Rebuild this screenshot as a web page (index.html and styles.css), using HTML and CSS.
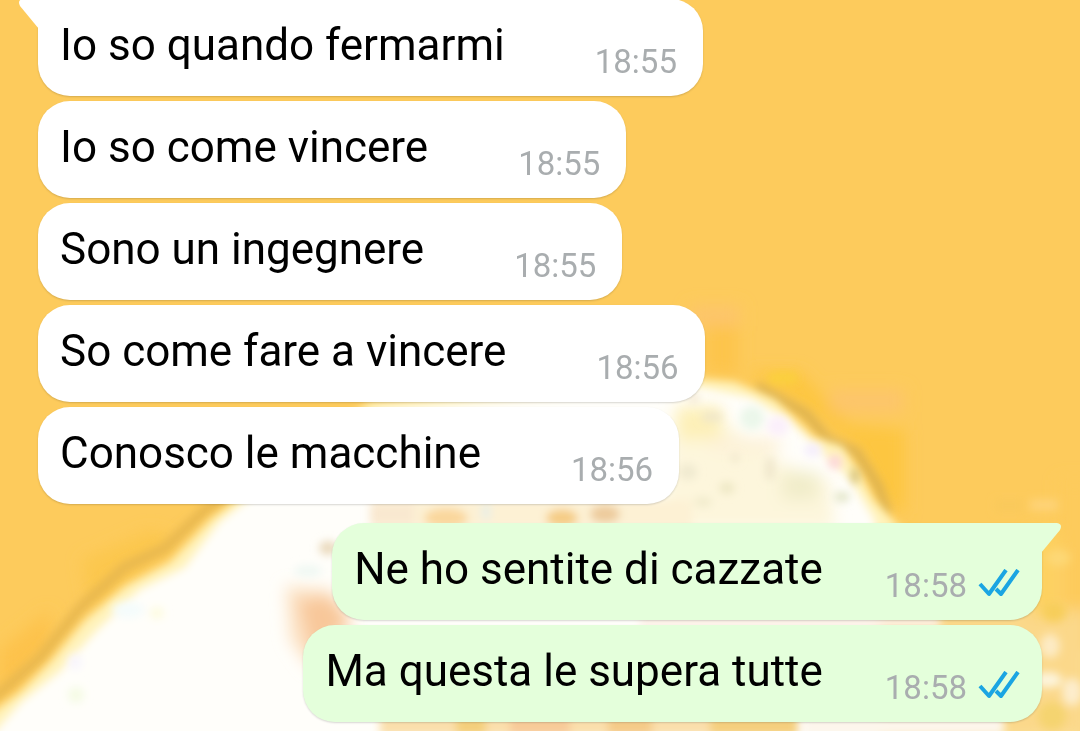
FILE: index.html
```html
<!DOCTYPE html>
<html lang="it">
<head>
    <meta charset="UTF-8">
    <title>Chat</title>
    <meta name="viewport" content="width=device-width, initial-scale=1.0">
    <link rel="stylesheet" href="styles.css">
</head>
<body>
    <svg class="wallpaper" viewBox="0 0 1080 731" preserveAspectRatio="xMidYMax slice" aria-hidden="true">
        <defs>
            <filter id="soft" x="-20%" y="-20%" width="140%" height="140%"><feGaussianBlur stdDeviation="4"/></filter>
            <filter id="softer" x="-50%" y="-50%" width="200%" height="200%"><feGaussianBlur stdDeviation="8"/></filter>
        </defs>
        <rect width="1080" height="731" fill="#fdcb5c"/>
        <!-- warm patches and darker fringe round the shape -->
        <g filter="url(#softer)">
            <path d="M82 560L150 530L180 540L90 610Z" fill="#fcc74e"/>
            <path d="M0 650L50 610L50 650L0 700Z" fill="#fdc24c"/>
            <path d="M706 320L738 320L738 376L706 372Z" fill="#fdc44c"/>
            <path d="M745 372L800 372L850 425L905 430L905 515L880 500L860 450L800 405Z" fill="#fdc641"/>
            <rect x="830" y="390" width="74" height="22" fill="#fdc56c"/>
            <rect x="690" y="306" width="50" height="20" fill="#fdc56c"/>
        </g>
        <g filter="url(#soft)" fill="none" stroke-linecap="round">
            <path d="M-6 698 L40 658 L82 606 L125 567 L165 548 L205 510 L240 490" stroke="#e8b850" stroke-width="10"/>
            <path d="M760 388 L806 414 L828 440 L856 452 L878 486 L886 510" stroke="#dfb450" stroke-width="10"/>
            <path d="M774 378 L792 378" stroke="#fbd03c" stroke-width="12"/>
        </g>
        <!-- pale body -->
        <g filter="url(#soft)">
            <path d="M-20 722 L20 692 L50 662 L85 620 L125 586 L170 562 L210 520 L300 450 L370 402 L520 390 L690 378 L735 382 L775 400 L815 438 L842 446 L860 474 L874 500 L900 528 L1000 640 L1080 650 L1080 760 L-20 760 Z" fill="#fff3bb"/>
            <path d="M-10 738 L22 702 L60 672 L96 632 L140 590 L185 568 L220 522 L300 460 L380 410 L520 400 L700 388 L750 398 L790 422 L825 456 L850 480 L874 520 L900 760 L0 760 Z" fill="#fffefa"/>
        </g>
        <g filter="url(#softer)">
            <path d="M676 415 L730 425 L780 462 L830 480 L835 530 L660 530 Z" fill="#fdf6dc"/>
            <rect x="676" y="406" width="46" height="34" fill="#fdf0b8"/>
            <rect x="710" y="438" width="70" height="14" fill="#fdf1d8"/>
            <rect x="782" y="472" width="36" height="28" fill="#f1edca"/>
            <path d="M286 586 L330 590 L352 622 L312 670 L290 640 Z" fill="#fce2c4"/>
            <path d="M298 600 L330 596 L352 622 L312 654 Z" fill="#f8c79a"/>
            <path d="M880 740L880 610L1000 580L1090 530L1090 740Z" fill="#fbd88a"/>
            <rect x="1030" y="530" width="28" height="84" fill="#fdd15e"/>
            <rect x="1060" y="480" width="30" height="130" fill="#fdcb5c"/>
        </g>
        <g filter="url(#soft)">
            <rect x="372" y="500" width="320" height="28" fill="#fdf1d4"/>
            <rect x="370" y="504" width="44" height="20" fill="#f9e8d0"/>
            <ellipse cx="446" cy="518" rx="22" ry="10" fill="#fad79c"/>
            <ellipse cx="486" cy="512" rx="5" ry="9" fill="#e9efe6"/>
            <ellipse cx="562" cy="518" rx="16" ry="9" fill="#f5cc84"/>
            <ellipse cx="605" cy="514" rx="15" ry="9" fill="#edcb9c"/>
            <ellipse cx="328" cy="548" rx="9" ry="7" fill="#ead9bc"/>
            <ellipse cx="308" cy="571" rx="14" ry="6" fill="#eff8f3"/>
            <ellipse cx="835" cy="462" rx="7" ry="7" fill="#fcd6dc"/>
            <ellipse cx="752" cy="418" rx="12" ry="12" fill="#ebf7ea"/>
            <ellipse cx="778" cy="426" rx="11" ry="10" fill="#fbeffb"/>
            <ellipse cx="813" cy="450" rx="9" ry="7" fill="#f5eefd"/>
            <ellipse cx="855" cy="476" rx="4" ry="8" fill="#d1bd76"/>
            <ellipse cx="842" cy="497" rx="8" ry="5" fill="#e2e5c7"/>
            <ellipse cx="694" cy="398" rx="5" ry="6" fill="#f3e8d3"/>
            <ellipse cx="688" cy="472" rx="9" ry="8" fill="#f0ead0"/>
            <ellipse cx="727" cy="488" rx="8" ry="6" fill="#eee8c5"/>
            <ellipse cx="703" cy="502" rx="9" ry="5" fill="#f1ebcc"/>
            <path d="M735 458V458M770 462V476M706 417H718" fill="none" stroke="#eee5ca" stroke-width="8" stroke-linecap="round"/>
            <ellipse cx="128" cy="610" rx="16" ry="8" fill="#f4fcfc"/>
            <ellipse cx="157" cy="613" rx="7" ry="6" fill="#fdfcdf"/>
            <ellipse cx="75" cy="662" rx="7" ry="8" fill="#f8f5fd"/>
            <ellipse cx="76" cy="695" rx="8" ry="8" fill="#f5fbe4"/>
            <rect x="995" y="500" width="28" height="11" fill="#f9c95b"/>
            <rect x="1030" y="499" width="28" height="12" fill="#fed377"/>
            <!-- strip under the last bubble -->
            <rect x="380" y="716" width="330" height="20" fill="#fbdfac"/>
            <rect x="456" y="716" width="30" height="20" fill="#f4cf7a"/>
            <rect x="510" y="716" width="60" height="20" fill="#f8ca98"/>
            <rect x="608" y="716" width="44" height="20" fill="#f5ca88"/>
            <rect x="710" y="716" width="88" height="20" fill="#f5cf7d"/>
            <rect x="804" y="716" width="200" height="20" fill="#fdf6ec"/>
            <rect x="640" y="616" width="300" height="12" fill="#fdf1e6"/>
            <!-- spots along the right edge -->
            <ellipse cx="1058" cy="558" rx="12" ry="8" fill="#fdd876"/>
            <ellipse cx="1054" cy="612" rx="12" ry="10" fill="#f7ce5a"/>
            <ellipse cx="1050" cy="646" rx="10" ry="12" fill="#fdebc4"/>
            <ellipse cx="1048" cy="680" rx="14" ry="8" fill="#fdf4dc"/>
            <ellipse cx="1072" cy="692" rx="10" ry="14" fill="#fdedcc"/>
            <ellipse cx="1052" cy="716" rx="14" ry="14" fill="#f5d470"/>
        </g>
    </svg>

    <main class="chat">
        <div class="message incoming">
            <svg class="tail" viewBox="0 0 20 30" aria-hidden="true"><path d="M20 0H4Q-2 1 1 7L20 30Z"/></svg>
            <p class="text">Io so quando fermarmi</p>
            <time class="time">18:55</time>
        </div>
        <div class="message incoming">
            <p class="text">Io so come vincere</p>
            <time class="time">18:55</time>
        </div>
        <div class="message incoming">
            <p class="text">Sono un ingegnere</p>
            <time class="time">18:55</time>
        </div>
        <div class="message incoming">
            <p class="text">So come fare a vincere</p>
            <time class="time">18:56</time>
        </div>
        <div class="message incoming">
            <p class="text">Conosco le macchine</p>
            <time class="time">18:56</time>
        </div>
        <div class="message outgoing first">
            <svg class="tail" viewBox="0 0 20 30" aria-hidden="true"><path d="M0 0H16Q22 1 19 7L0 30Z"/></svg>
            <p class="text">Ne ho sentite di cazzate</p>
            <time class="time">18:58</time>
            <svg class="ticks" viewBox="0 0 42 28" role="img" aria-label="Letto"><path d="M2 15L11 25L28 1M18 20L23 25L40 1"/></svg>
        </div>
        <div class="message outgoing">
            <p class="text">Ma questa le supera tutte</p>
            <time class="time">18:58</time>
            <svg class="ticks" viewBox="0 0 42 28" role="img" aria-label="Letto"><path d="M2 15L11 25L28 1M18 20L23 25L40 1"/></svg>
        </div>
    </main>
</body>
</html>
```
FILE: styles.css
```css
:root {
    --wall: #fdcb5c;
    --incoming: #ffffff;
    --outgoing: #e4ffdb;
    --muted: #a9adaf;
    --read: #1ba5e2;
}
* {
    box-sizing: border-box;
}
body {
    margin: 0;
    background: var(--wall);
    font-family: Roboto, "Liberation Sans", sans-serif;
    color: #000;
}
.wallpaper {
    position: fixed;
    inset: 0;
    width: 100%;
    height: 100%;
}
/* messages stick to the bottom, older ones run off the top */
.chat {
    position: relative;
    display: flex;
    flex-direction: column;
    justify-content: flex-end;
    gap: 5px;
    height: 100vh;
    padding: 0 38px 9px;
    overflow: hidden;
}
.message {
    position: relative;
    display: flex;
    flex-shrink: 0;
    align-items: flex-end;
    padding: 20px 26px 17px 22px;
    border-radius: 32px;
    box-shadow: 0 1px 2px rgba(0, 0, 0, 0.16);
}
.incoming {
    align-self: flex-start;
    background: var(--incoming);
}
.outgoing {
    align-self: flex-end;
    padding-right: 22px;
    background: var(--outgoing);
}
.message:first-child {
    border-top-left-radius: 0;
}
.first {
    margin-top: 14px;
    border-top-right-radius: 0;
}
.text {
    margin: 0;
    padding-bottom: 8px;
    font-size: 44px;
    line-height: 52px;
}
.time {
    margin-left: 90px;
    color: var(--muted);
    font-size: 33px;
    line-height: 34px;
}
.outgoing .time {
    margin-left: 62px;
}
.ticks {
    width: 42px;
    height: 28px;
    margin: 0 0 6px 11px;
    fill: none;
    stroke: var(--read);
    stroke-width: 4;
    stroke-linejoin: round;
}
.tail {
    position: absolute;
    top: 0;
    width: 20px;
    height: 30px;
}
.incoming .tail {
    right: 100%;
    margin-right: -1px;
    fill: var(--incoming);
}
.outgoing .tail {
    left: 100%;
    margin-left: -1px;
    fill: var(--outgoing);
}
```
